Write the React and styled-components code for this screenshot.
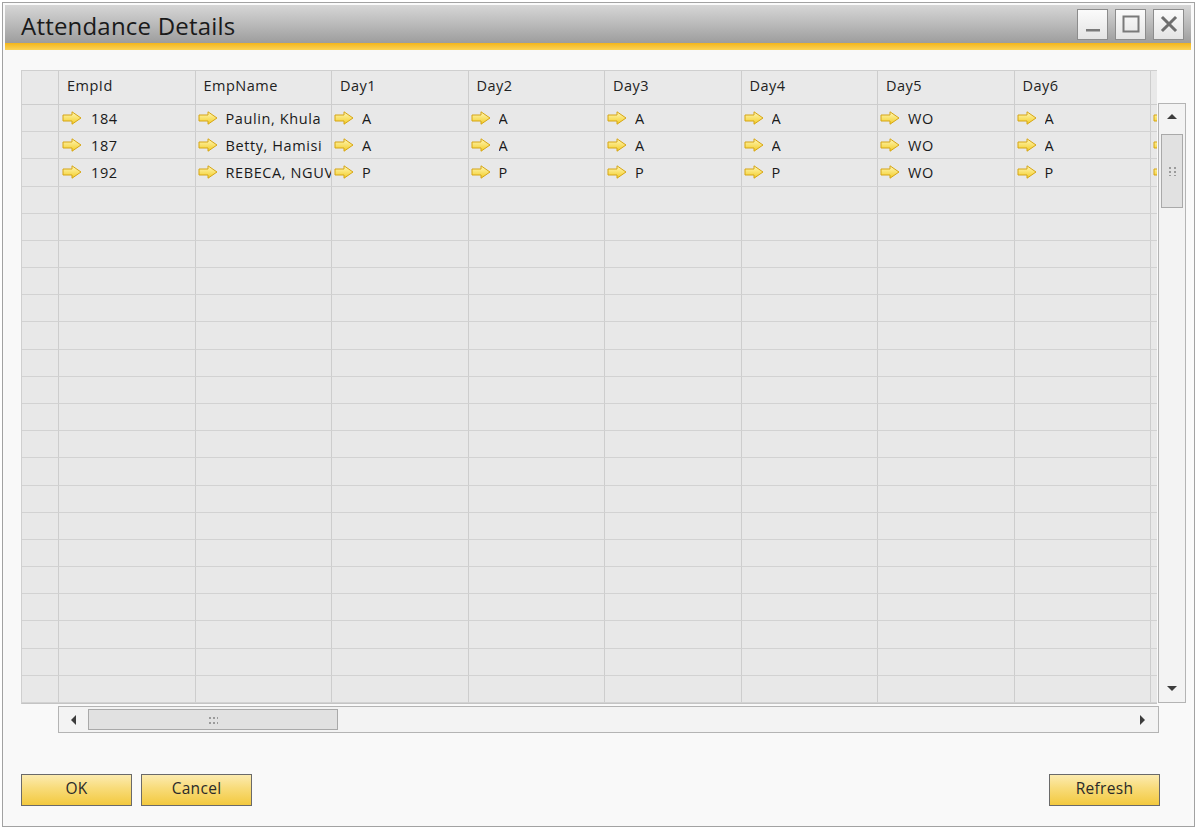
import React from "react";
import styled, { createGlobalStyle } from "styled-components";

const Global = createGlobalStyle`
  html, body { margin: 0; padding: 0; background: #ffffff; }
  body { font-family: "Open Sans", "Noto Sans", sans-serif; }
  * { box-sizing: border-box; }
`;

const Page = styled.div`
  width: 1200px;
  height: 830px;
  padding: 2px 5px 3px 2px;
`;

const Window = styled.div`
  width: 1193px;
  height: 825px;
  border: 1px solid #a2a2a2;
  padding: 2px 3px 0 2px;
  background: #fafafa;
  display: flex;
  flex-direction: column;
`;

const TitleBar = styled.div`
  height: 45px;
  flex: none;
  display: flex;
  align-items: center;
  justify-content: space-between;
  padding: 0 7px 7px 16px;
  background:
    linear-gradient(#f3b51a, #fad35a) bottom / 100% 7px no-repeat,
    linear-gradient(#d6d6d6 0%, #bdbdbd 45%, #9d9d9d 100%) top / 100% 38px no-repeat;
`;

const Title = styled.div`
  font-family: "Open Sans", "Noto Sans", sans-serif;
  font-size: 24px;
  color: #1a1a1a;
  letter-spacing: 0.2px;
  padding-top: 3px;
`;

const WinButtons = styled.div`
  display: flex;
  gap: 7px;
`;

const WinButton = styled.div`
  width: 31px;
  height: 31px;
  border: 1px solid #8c8c8c;
  background: linear-gradient(#fbfbfb, #e4e4e4);
  display: flex;
  align-items: center;
  justify-content: center;
`;

const Body = styled.div`
  flex: 1;
  display: flex;
  flex-direction: column;
  padding: 20px 0 0 16px;
  background: #f9f9f9;
`;

const GridWrap = styled.div`
  display: grid;
  grid-template-columns: 1136px 30px;
  grid-template-rows: 34px 600px 29px;
`;

const Table = styled.div`
  grid-column: 1;
  grid-row: 1 / span 2;
  overflow: hidden;
  display: grid;
  grid-template-columns: 37px repeat(9, 136.5px);
  grid-template-rows: 34px repeat(22, 1fr);
  background: #e8e8e8;
  border-top: 1px solid #cfcfcf;
  border-left: 1px solid #cfcfcf;
  border-bottom: 1px solid #c4c4c4;
`;

const HeadCell = styled.div`
  background: #e9e9e9;
  border-right: 1px solid #cdcdcd;
  border-bottom: 1px solid #cdcdcd;
  font-size: 14.5px;
  letter-spacing: 0.5px;
  color: #222;
  padding: 0 0 5px 8px;
  display: flex;
  align-items: center;
  white-space: nowrap;
  overflow: hidden;
`;

const Cell = styled.div`
  background: #e8e8e8;
  border-right: 1px solid #cdcdcd;
  border-bottom: 1px solid #d2d2d2;
  font-size: 14.5px;
  letter-spacing: 0.6px;
  color: #1a1a1a;
  display: flex;
  align-items: center;
  padding-left: ${(p) => (p.$first ? 3 : 2)}px;
  white-space: nowrap;
  overflow: hidden;
  gap: 8px;
`;

const CellText = styled.span`
  padding-left: ${(p) => (p.$indent ? 1 : 0)}px;
  overflow: hidden;
  flex: 1;
  min-width: 0;
  text-overflow: clip;
`;

const VScroll = styled.div`
  grid-column: 2;
  grid-row: 2;
  margin: -1px 1px 1px 1px;
  border: 1px solid #b4b4b4;
  background: #f3f3f3;
  display: flex;
  flex-direction: column;
  align-items: center;
  padding: 0 2px;
`;

const ArrowBtn = styled.div`
  width: 100%;
  height: ${(p) => p.$h || 26}px;
  display: flex;
  align-items: center;
  justify-content: center;
  flex: none;
`;

const VThumb = styled.div`
  width: 100%;
  height: 74px;
  margin-top: 2px;
  border: 1px solid #a9a9a9;
  background: #e1e1e1;
  display: flex;
  align-items: center;
  justify-content: center;
`;

const Spacer = styled.div`
  flex: 1;
`;

const HScroll = styled.div`
  grid-column: 1;
  grid-row: 3;
  margin: 2px -2px 0 37px;
  border: 1px solid #b4b4b4;
  background: #f3f3f3;
  display: flex;
  align-items: center;
  padding: 2px 2px;
`;

const HArrow = styled.div`
  width: 27px;
  height: 100%;
  display: flex;
  align-items: center;
  justify-content: center;
  flex: none;
`;

const HThumb = styled.div`
  width: 250px;
  height: 100%;
  border: 1px solid #a9a9a9;
  background: #e1e1e1;
  display: flex;
  align-items: center;
  justify-content: center;
  flex: none;
`;

const Footer = styled.div`
  display: flex;
  align-items: center;
  padding: 41px 31px 0 0;
  gap: 9px;
`;

const Button = styled.button`
  width: 111px;
  height: 32px;
  border: 1px solid #6a6a6a;
  background: linear-gradient(#fcebb0 0%, #f8db78 45%, #f3c93f 100%);
  font-family: "Open Sans", "Noto Sans", sans-serif;
  font-size: 15.5px;
  letter-spacing: 0.3px;
  color: #2a2a2a;
  padding: 0 0 4px;
  margin-left: ${(p) => (p.$push ? "auto" : "0")};
  cursor: default;
`;

const Arrow = () => (
  <svg width="20" height="14" viewBox="0 0 20 14" style={{ flex: "none" }}>
    <defs>
      <linearGradient id="ag" x1="0" y1="0" x2="0" y2="1">
        <stop offset="0" stopColor="#fff8b8" />
        <stop offset="1" stopColor="#f3cc25" />
      </linearGradient>
    </defs>
    <path
      d="M1 4 H10 V0.8 L19 7 L10 13.2 V10 H1 Z"
      fill="url(#ag)"
      stroke="#d6a514"
      strokeWidth="1"
      strokeLinejoin="round"
    />
  </svg>
);

const Grip = ({ vertical }) => (
  <svg width="10" height="10" viewBox="0 0 10 10">
    {[0, 1, 2].map((i) =>
      [0, 1].map((j) => {
        const x = vertical ? 2 + j * 5 : 1 + i * 4;
        const y = vertical ? 1 + i * 4 : 2 + j * 5;
        return <rect key={`${i}-${j}`} x={x} y={y} width="2" height="2" fill="#9b9b9b" />;
      })
    )}
  </svg>
);

const Tri = ({ dir }) => {
  const paths = {
    up: "M1 7 L6 2 L11 7 Z",
    down: "M1 3 L6 8 L11 3 Z",
    left: "M7 1 L2 6 L7 11 Z",
    right: "M3 1 L8 6 L3 11 Z",
  };
  return (
    <svg width="12" height="12" viewBox="0 0 12 12">
      <path d={paths[dir]} fill="#3c3c3c" />
    </svg>
  );
};

const columns = ["EmpId", "EmpName", "Day1", "Day2", "Day3", "Day4", "Day5", "Day6", ""];

const rows = [
  ["184", "Paulin, Khula", "A", "A", "A", "A", "WO", "A", ""],
  ["187", "Betty, Hamisi", "A", "A", "A", "A", "WO", "A", ""],
  ["192", "REBECA, NGUVU", "P", "P", "P", "P", "WO", "P", ""],
];

const TOTAL_ROWS = 22;

export default function App() {
  const body = [];
  for (let r = 0; r < TOTAL_ROWS; r++) {
    const data = rows[r];
    body.push(<Cell key={`h${r}`} />);
    columns.forEach((c, ci) => {
      body.push(
        <Cell key={`${r}-${ci}`} $first={ci === 0}>
          {data && <Arrow />}
          {data && data[ci] && <CellText $indent={ci === 0}>{data[ci]}</CellText>}
        </Cell>
      );
    });
  }

  return (
    <Page>
      <Global />
      <Window>
        <TitleBar>
          <Title>Attendance Details</Title>
          <WinButtons>
            <WinButton>
              <svg width="20" height="20" viewBox="0 0 20 20">
                <rect x="3" y="15" width="14" height="2.5" fill="#7a7a7a" />
              </svg>
            </WinButton>
            <WinButton>
              <svg width="20" height="20" viewBox="0 0 20 20">
                <rect x="2.5" y="2.5" width="15" height="15" fill="none" stroke="#7a7a7a" strokeWidth="2" />
              </svg>
            </WinButton>
            <WinButton>
              <svg width="20" height="20" viewBox="0 0 20 20">
                <path d="M4 4 L16 16 M16 4 L4 16" stroke="#6e6e6e" strokeWidth="3" strokeLinecap="square" />
              </svg>
            </WinButton>
          </WinButtons>
        </TitleBar>
        <Body>
          <GridWrap>
            <Table>
              <HeadCell />
              {columns.map((c, i) => (
                <HeadCell key={`c${i}`}>{c}</HeadCell>
              ))}
              {body}
            </Table>
            <VScroll>
              <ArrowBtn $h={28}>
                <Tri dir="up" />
              </ArrowBtn>
              <VThumb>
                <Grip vertical />
              </VThumb>
              <Spacer />
              <ArrowBtn $h={26}>
                <Tri dir="down" />
              </ArrowBtn>
            </VScroll>
            <HScroll>
              <HArrow>
                <Tri dir="left" />
              </HArrow>
              <HThumb>
                <Grip />
              </HThumb>
              <Spacer />
              <HArrow>
                <Tri dir="right" />
              </HArrow>
            </HScroll>
          </GridWrap>
          <Footer>
            <Button>OK</Button>
            <Button>Cancel</Button>
            <Button $push>Refresh</Button>
          </Footer>
        </Body>
      </Window>
    </Page>
  );
}
